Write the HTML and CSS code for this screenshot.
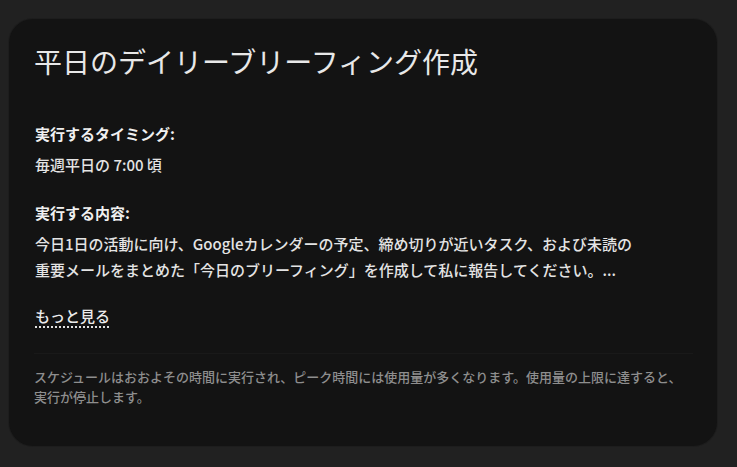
FILE: index.html
```html
<!DOCTYPE html>
<html lang="ja">
<head>
<meta charset="utf-8">
<title>平日のデイリーブリーフィング作成</title>
<link rel="stylesheet" href="styles.css">
</head>
<body>
<section class="card">
  <h1 class="title">平日のデイリーブリーフィング作成</h1>
  <div class="field field-timing">
    <div class="label">実行するタイミング:</div>
    <div class="value">毎週平日の 7:00 頃</div>
  </div>
  <div class="field field-content">
    <div class="label">実行する内容:</div>
    <div class="value">今日1日の活動に向け、Googleカレンダーの予定、締め切りが近いタスク、および未読の<br>重要メールをまとめた「今日のブリーフィング」を作成して私に報告してください。...</div>
  </div>
  <a class="more" href="#">もっと見る</a>
  <hr class="divider">
  <p class="note">スケジュールはおおよその時間に実行され、ピーク時間には使用量が多くなります。使用量の上限に達すると、実行が停止します。</p>
</section>
</body>
</html>
```

FILE: styles.css
```css
html, body {
  margin: 0;
  padding: 0;
  background: #212121;
}
body {
  font-family: "Noto Sans CJK JP", "Noto Sans", sans-serif;
  padding: 19px 0 0 9px;
  height: 467px;
  box-sizing: border-box;
  overflow: hidden;
}
.card {
  width: 708px;
  height: 427px;
  box-sizing: border-box;
  background: #131313;
  border-radius: 24px;
  box-shadow: 0 0 0 1px #1d1d1d;
  padding: 24px 25px 0 26px;
  display: flex;
  flex-direction: column;
  align-items: flex-start;
}
.title {
  margin: 0 0 0 -1px;
  font-size: 28px;
  line-height: 36px;
  font-weight: 400;
  color: #e8e8e8;
}
.field {
  display: flex;
  flex-direction: column;
  gap: 5px;
}
.field-timing { margin-top: 42px; }
.field-content { margin-top: 22px; }
.label {
  font-size: 15px;
  line-height: 26px;
  font-weight: 700;
  color: #f0f0f0;
}
.value {
  font-size: 15px;
  line-height: 26px;
  font-weight: 500;
  color: #e4e4e4;
}
.more {
  margin-top: 20px;
  font-size: 15px;
  line-height: 26px;
  font-weight: 500;
  color: #ececec;
  text-decoration: underline dotted #e0e0e0;
  text-decoration-thickness: 2px;
  text-underline-offset: 4px;
}
.divider {
  align-self: stretch;
  margin: 24px -1px 0 -1px;
  border: 0;
  height: 1px;
  background: #191919;
}
.note {
  margin: 13px 0 0 -1px;
  font-size: 13px;
  line-height: 20px;
  font-weight: 500;
  color: #8e8e8e;
}
```
